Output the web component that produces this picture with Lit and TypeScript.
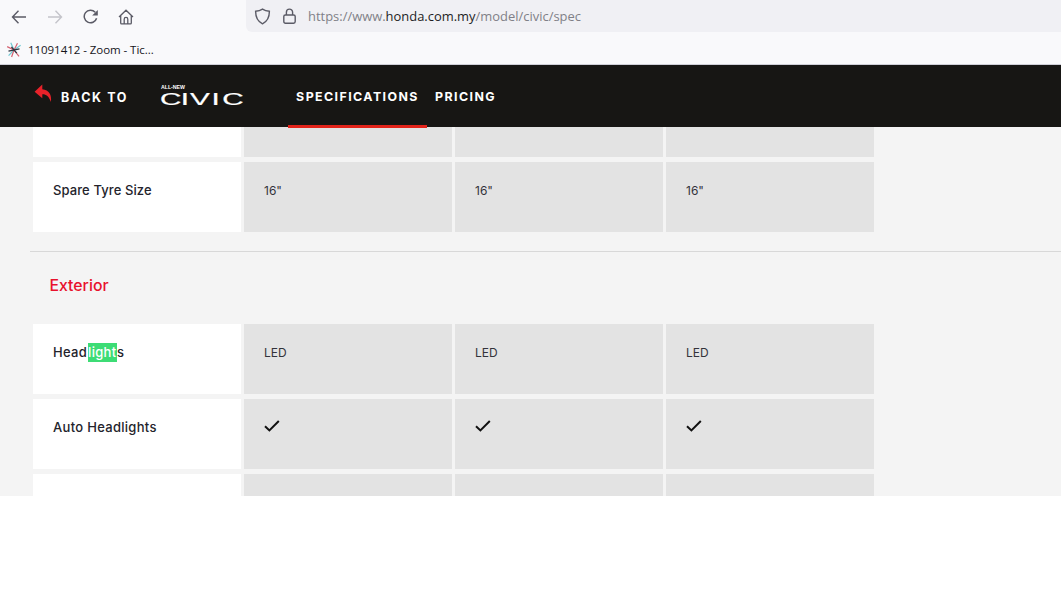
import { LitElement, html, css } from "lit";
import { customElement } from "lit/decorators.js";

const check = html`<svg class="check" width="16" height="12" viewBox="0 0 16 12"><path d="M1 6.2 L5.4 10.4 L14.8 1" fill="none" stroke="#111" stroke-width="2"/></svg>`;

@customElement("app-root")
export class AppRoot extends LitElement {
  static styles = css`
    :host { display: block; width: 1061px; height: 603px; background: #fff; overflow: hidden; font-family: "Inter", "Liberation Sans", sans-serif; }
    .chrome { height: 64px; background: #f9f9fb; border-bottom: 1px solid #cfcfd8; box-sizing: content-box; display: flex; flex-direction: column; }
    .toolbar { height: 32px; display: flex; }
    .tools { width: 246px; flex: none; display: flex; align-items: center; }
    .tools svg { flex: none; display: block; margin-top: 1px; }
    .t1 { margin-left: 11px; }
    .t2 { margin-left: 20px; }
    .t3 { margin-left: 20px; }
    .t4 { margin-left: 19px; }
    .url { flex: 1; background: #f0f0f4; border-bottom-left-radius: 6px; display: flex; align-items: center; font: 12.95px/18px "Open Sans", "Noto Sans", sans-serif; color: #808087; padding-left: 8px; }
    .url svg { flex: none; display: block; }
    .lock { margin-left: 12px; margin-right: 12px; }
    .url b { font-weight: 400; color: #1e1e24; }
    .bookmarks { flex: 1; display: flex; align-items: center; padding-left: 6px; gap: 6px; font: 11.5px/16px "Open Sans", "Noto Sans", sans-serif; letter-spacing: -.05px; color: #15141a; padding-top: 3px; }
    .nav { height: 62px; background: #171614; display: flex; align-items: stretch; color: #fff; position: relative; z-index: 1; }
    .back { display: flex; align-items: center; margin-left: 34px; width: 126px; flex: none; }
    .back svg { margin-top: -5px; }
    .back span { font-size: 12.5px; font-weight: 700; letter-spacing: 1.6px; margin-left: 9px; margin-top: 2px; white-space: nowrap; }
    .logo { display: block; flex: none; margin-top: 18px; }
    .logo text { fill: #fff; font-family: "Liberation Sans", sans-serif; }
    .logo .word { stroke: #fff; stroke-width: .2px; }
    .links { display: flex; margin-left: 42px; }
    .link { font-size: 12.4px; font-weight: 700; letter-spacing: 1.42px; display: flex; align-items: center; justify-content: center; padding-top: 3px; white-space: nowrap; box-sizing: border-box; height: 63px; border-bottom: 3px solid transparent; }
    .link.on { width: 139px; border-bottom-color: #e2231a; }
    .link.off { margin-left: 8px; }
    .content { height: 369px; background: #f4f4f4; overflow: hidden; padding-left: 33px; display: flex; flex-direction: column; }
    .row { display: grid; grid-template-columns: 208px 208px 208px 208px; column-gap: 3px; flex: none; height: 70px; margin-bottom: 5px; }
    .row.top { height: 30px; }
    .row.tail { height: 22px; margin-bottom: 0; }
    .row.last { margin-bottom: 0; }
    .label { background: #fff; padding: 20px 0 0 20px; font-size: 13px; line-height: 16px; font-weight: 500; color: #23232b; letter-spacing: .1px; white-space: nowrap; }
    .wide .label { letter-spacing: .3px; }
    .val { background: #e3e3e3; padding: 21px 0 0 20px; font-size: 12px; line-height: 16px; color: #33333b; }
    .val .check { display: block; }
    .hl { background: #3ddc75; color: #fff; display: inline-block; line-height: 19px; height: 19px; vertical-align: top; margin: -1px 0 0 1px; padding-right: .5px; }
    hr { border: 0; height: 1px; background: #d8d8d8; margin: 19px 0 0 -3px; width: 1031px; flex: none; }
    h2 { margin: 24px 0 29px 16.5px; font-size: 15.8px; line-height: 19px; font-weight: 500; color: #e8112d; }
  `;

  private row(label: unknown, v: unknown, cls = "") {
    return html`<div class="row ${cls}"><div class="label">${label}</div><div class="val">${v}</div><div class="val">${v}</div><div class="val">${v}</div></div>`;
  }

  render() {
    return html`
      <div class="chrome">
        <div class="toolbar">
          <div class="tools">
            <svg class="t1" width="16" height="16" viewBox="0 0 16 16" fill="none" stroke="#5b5b66" stroke-width="1.4"><path d="M15 8H1.5M7.5 1.8 1.5 8l6 6.2"/></svg>
            <svg class="t2" width="16" height="16" viewBox="0 0 16 16" fill="none" stroke="#c4c4ca" stroke-width="1.4"><path d="M1 8h13.5M8.5 1.8l6 6.2-6 6.2"/></svg>
            <svg class="t3" width="16" height="16" viewBox="0 0 16 16" fill="none"><path d="M13.6 9.2A6.3 6.3 0 1 1 12.2 3.2" stroke="#5b5b66" stroke-width="1.5"/><path d="M14.8 1v5.6H9.2z" fill="#5b5b66"/></svg>
            <svg class="t4" width="16" height="16" viewBox="0 0 16 16" fill="none" stroke="#5b5b66" stroke-width="1.3"><path d="M1 8 8 1.2 15 8M2.7 6.6V14a.9.9 0 0 0 .9.9h8.8a.9.9 0 0 0 .9-.9V6.6M6.2 14.8V10.2a1.8 1.8 0 0 1 3.6 0v4.6"/></svg>
          </div>
          <div class="url">
            <svg width="17" height="17" viewBox="0 0 17 17" fill="none" stroke="#5b5b66" stroke-width="1.4"><path d="M8.5 1.2C6.4 2.6 4 3.2 1.6 3.3c0 5.6 1.6 10 6.9 12.5 5.3-2.5 6.9-6.9 6.9-12.5-2.4-.1-4.8-.7-6.9-2.1z"/></svg>
            <svg class="lock" width="13" height="16" viewBox="0 0 13 16" fill="none" stroke="#5b5b66" stroke-width="1.4"><path d="M3.4 7V4.2a3.1 3.1 0 0 1 6.2 0V7"/><rect x=".8" y="7" width="11.4" height="8.2" rx="1.6"/></svg>
            <span>https://www.<b>honda.com.my</b>/model/civic/spec</span>
          </div>
        </div>
        <div class="bookmarks">
          <svg width="16" height="16" viewBox="0 0 16 16" fill="none" stroke-width="1.2">
            <path d="M8 8 4.8 .8" stroke="#6fc8d2"/>
            <path d="M8 8 14.6 3.2" stroke="#6fc8d2"/>
            <path d="M8 8 11.5 1.2" stroke="#d4606f"/>
            <path d="M8 8 1.2 4.6" stroke="#d4606f"/>
            <path d="M8 8 2.6 13.6" stroke="#6fc8d2"/>
            <path d="M8 8 5.6 15" stroke="#d4606f"/>
            <path d="M8 8 13 14.4" stroke="#d4606f"/>
            <path d="M2.5 9.2 13.5 6.8" stroke="#2c3540" stroke-width="1.3"/>
            <path d="M5.4 4.8 10.8 11.2" stroke="#2c3540" stroke-width="1.3"/>
          </svg>
          <span>11091412 - Zoom - Tic...</span>
        </div>
      </div>
      <div class="nav">
        <div class="back">
          <svg width="18" height="19" viewBox="0 0 18 19"><path d="M8.3 .6 .6 7.8l7.7 6.4v-4c3.6-.2 6.6 2 8.6 7.7 1.1-6.6-1.9-12-8.6-12.6z" fill="#e8222a"/></svg>
          <span>BACK TO</span>
        </div>
        <svg class="logo" width="86" height="26" viewBox="0 0 86 26">
          <text x="1" y="5.7" font-size="5" font-weight="700" textLength="24" lengthAdjust="spacingAndGlyphs">ALL-NEW</text>
          <text class="word" transform="scale(1.75 1)" x="0 11.9 17.2 29.4 35.6" y="22" font-size="17">CIVIC</text>
        </svg>
        <div class="links">
          <div class="link on">SPECIFICATIONS</div>
          <div class="link off">PRICING</div>
        </div>
      </div>
      <div class="content">
        ${this.row("", "", "top")}
        ${this.row("Spare Tyre Size", "16\"", "last")}
        <hr />
        <h2>Exterior</h2>
        ${this.row(html`Head<span class="hl">light</span>s`, "LED", "wide")}
        ${this.row("Auto Headlights", check, "wide")}
        ${this.row("", "", "tail")}
      </div>
    `;
  }
}
